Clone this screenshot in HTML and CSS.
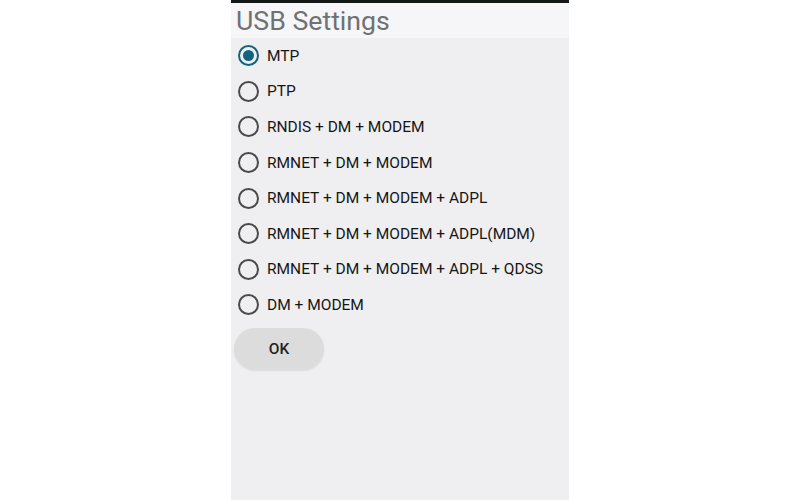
FILE: index.html
```html
<!DOCTYPE html>
<html lang="en">
<head>
    <meta charset="UTF-8">
    <meta name="viewport" content="width=device-width, initial-scale=1.0">
    <title>USB Settings</title>
    <link rel="stylesheet" href="styles.css">
</head>
<body>
    <div class="screen">
        <div class="title-bar">
            <h1 class="title">USB Settings</h1>
        </div>
        <form class="usb-form">
            <label class="option"><input type="radio" name="mode" checked><span class="radio"></span>MTP</label>
            <label class="option"><input type="radio" name="mode"><span class="radio"></span>PTP</label>
            <label class="option"><input type="radio" name="mode"><span class="radio"></span>RNDIS + DM + MODEM</label>
            <label class="option"><input type="radio" name="mode"><span class="radio"></span>RMNET + DM + MODEM</label>
            <label class="option"><input type="radio" name="mode"><span class="radio"></span>RMNET + DM + MODEM + ADPL</label>
            <label class="option"><input type="radio" name="mode"><span class="radio"></span>RMNET + DM + MODEM + ADPL(MDM)</label>
            <label class="option"><input type="radio" name="mode"><span class="radio"></span>RMNET + DM + MODEM + ADPL + QDSS</label>
            <label class="option"><input type="radio" name="mode"><span class="radio"></span>DM + MODEM</label>
            <button type="button" class="ok-btn">OK</button>
        </form>
    </div>
</body>
</html>
```

FILE: styles.css
```css
* {
    margin: 0;
    padding: 0;
    box-sizing: border-box;
    font-family: Roboto, "Noto Sans", sans-serif;
}

body {
    background-color: #fff;
    height: 500px;
    overflow: hidden;
}

.screen {
    width: 338px;
    height: 500px;
    margin-left: 231px;
    background-color: #efeff1;
    border-top: 3px solid #141816;
}

.title-bar {
    height: 35px;
    background-color: #f6f6f8;
    padding-left: 5px;
}

.title {
    font-size: 26.7px;
    font-weight: normal;
    color: #6f7174;
    line-height: 37px;
}

.usb-form {
    display: flex;
    flex-direction: column;
    align-items: flex-start;
}

.option {
    display: flex;
    align-items: center;
    height: 35.6px;
    padding-left: 7px;
    font-size: 15.5px;
    color: #161616;
    cursor: pointer;
}

.option input {
    display: none;
}

.radio {
    width: 21px;
    height: 21px;
    border: 2px solid #4a4a4a;
    border-radius: 50%;
    margin-right: 8px;
    display: flex;
    align-items: center;
    justify-content: center;
}

.option input:checked + .radio {
    border: 2.5px solid #12637f;
}

.option input:checked + .radio::after {
    content: "";
    width: 11px;
    height: 11px;
    border-radius: 50%;
    background-color: #12637f;
}

.ok-btn {
    margin: 5px 0 0 3px;
    width: 90px;
    height: 42px;
    border: none;
    border-radius: 21px;
    background-color: #dcdcdc;
    box-shadow: 0 1px 2px rgba(0, 0, 0, 0.08);
    font-size: 15.5px;
    font-weight: 500;
    color: #222;
    cursor: pointer;
}
```
